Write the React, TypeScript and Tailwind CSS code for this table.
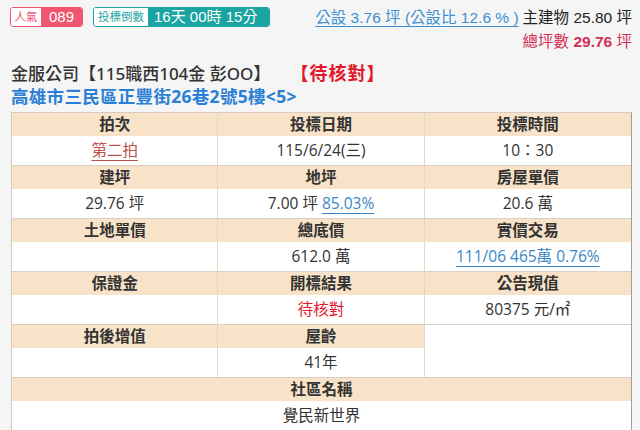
import React from "react";

const F = { fontFamily: '"Open Sans", "Noto Sans CJK TC", sans-serif' };

function Cell({ children, last, kind }: { children?: React.ReactNode; last?: boolean; kind: "h" | "v" | "blank" }) {
  const k =
    kind === "h"
      ? "h-[23px] bg-[#f8e3c9] font-semibold text-[#333]"
      : kind === "blank"
      ? "h-[23px] bg-white"
      : "h-[29px] bg-white text-[#333]";
  return (
    <div className={`flex items-center justify-center whitespace-nowrap ${k} ${last ? "" : "border-r border-[#e2d8cb]"}`}>
      {children}
    </div>
  );
}

type C = { h?: string; v?: React.ReactNode; blank?: boolean };

function Block({ cols }: { cols: C[] }) {
  return (
    <div className="grid grid-cols-3 border-b border-[#d9d0c4]">
      {cols.map((c, i) => (
        <Cell key={"h" + i} kind={c.blank ? "blank" : "h"} last={i === 2}>
          {c.h}
        </Cell>
      ))}
      {cols.map((c, i) => (
        <Cell key={"v" + i} kind="v" last={i === 2}>
          {c.v}
        </Cell>
      ))}
    </div>
  );
}

export default function App() {
  return (
    <div className="w-[640px] h-[430px] overflow-hidden bg-[#f5f5f5] pl-[11px] pr-[8px]" style={F}>
      <div className="flex justify-between h-[53px]">
        <div className="flex gap-[10px] pt-[7px] whitespace-nowrap" style={{ fontFamily: '"Liberation Sans", "Noto Sans CJK TC", sans-serif' }}>
          <div className="flex h-[20px] rounded-[3px] overflow-hidden border border-[#f0566f] ml-[-1px]">
            <span className="bg-white text-[#f0566f] text-[11.5px] leading-[18px] w-[30px] text-center">人氣</span>
            <span className="bg-[#f0566f] text-white text-[15px] leading-[18px] w-[41px] text-center">089</span>
          </div>
          <div className="flex h-[20px] rounded-[3px] overflow-hidden border border-[#1ba5a2]">
            <span className="bg-white text-[#1ba5a2] text-[11.5px] leading-[18px] w-[54px] text-center">投標倒數</span>
            <span className="bg-[#1ba5a2] text-white text-[15px] leading-[18px] px-[6px] w-[121px]">16天 00時 15分</span>
          </div>
        </div>
        <div className="flex flex-col items-end pt-[8px] text-[15.5px] leading-[20px] whitespace-nowrap" style={{ fontFamily: '"Liberation Sans", "Noto Sans CJK TC", sans-serif' }}>
          <div className="flex gap-[4px]">
            <span className="text-[#3d8fd1] underline decoration-[#3d8fd1] underline-offset-[3px]">公設 3.76 坪 (公設比 12.6 % )</span>
            <span className="text-[#222]">主建物 25.80 坪</span>
          </div>
          <div className="text-[#d12f55] mt-[4px]">
            總坪數 <span className="font-bold">29.76</span> 坪
          </div>
        </div>
      </div>
      <div className="flex items-center h-[23px] text-[17px] mt-[9px] whitespace-nowrap" style={{ fontFamily: '"Noto Sans", "Noto Sans CJK TC", sans-serif' }}>
        <span className="text-[#333] font-medium">金服公司【115職西104金 彭OO】</span>
        <span className="text-[#e3172b] font-bold text-[18px] ml-[20px] tracking-[1px]">【待核對】</span>
      </div>
      <div className="h-[24px] text-[17.5px] leading-[22px] font-bold text-[#2b80d6] whitespace-nowrap tracking-[0.3px]" style={{ fontFamily: '"Noto Sans", "Noto Sans CJK TC", sans-serif' }}>
        高雄市三民區正豐街26巷2號5樓&lt;5&gt;
      </div>
      <div className="border-t border-l border-r border-t-[#d6ccc0] border-l-[#cfcac4] border-r-[#9e9e9e] text-[15.5px] mt-[3px]">
        <Block
          cols={[
            { h: "拍次", v: <span className="text-[#c0504d] underline decoration-[#c0504d] underline-offset-[4px]">第二拍</span> },
            { h: "投標日期", v: "115/6/24(三)" },
            { h: "投標時間", v: "10：30" },
          ]}
        />
        <Block
          cols={[
            { h: "建坪", v: "29.76 坪" },
            {
              h: "地坪",
              v: (
                <span>
                  7.00 坪 <span className="text-[#3a87c8] underline decoration-[#3a87c8] underline-offset-[4px]">85.03%</span>
                </span>
              ),
            },
            { h: "房屋單價", v: "20.6 萬" },
          ]}
        />
        <Block
          cols={[
            { h: "土地單價", v: "" },
            { h: "總底價", v: "612.0 萬" },
            { h: "實價交易", v: <span className="text-[#3a87c8] underline decoration-[#3a87c8] underline-offset-[4px]">111/06 465萬 0.76%</span> },
          ]}
        />
        <Block
          cols={[
            { h: "保證金", v: "" },
            { h: "開標結果", v: <span className="text-[#e3172b]">待核對</span> },
            { h: "公告現值", v: "80375 元/㎡" },
          ]}
        />
        <Block
          cols={[
            { h: "拍後增值", v: "" },
            { h: "屋齡", v: "41年" },
            { blank: true, v: "" },
          ]}
        />
        <div className="border-b border-[#d9d0c4]">
          <div className="h-[23px] bg-[#f8e3c9] font-semibold text-[#333] flex items-center justify-center">社區名稱</div>
          <div className="h-[29px] bg-white text-[#333] flex items-center justify-center">覺民新世界</div>
        </div>
      </div>
    </div>
  );
}
